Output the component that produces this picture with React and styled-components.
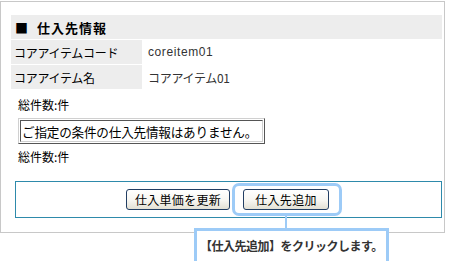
import styled, { createGlobalStyle } from "styled-components";

const GlobalStyle = createGlobalStyle`
	html, body {
		margin: 0;
		padding: 0;
		background: #fff;
	}
	body {
		font-family: "Liberation Sans", "Noto Sans CJK JP", sans-serif;
		font-size: 12px;
		color: #000;
	}
`;

// --------------------------------------------------

const Stage = styled.div`
	position: relative;
	width: 454px;
	height: 261px;
	overflow: hidden;
`;

const Panel = styled.div`
	box-sizing: border-box;
	margin-top: 1px;
	width: 445px;
	height: 232px;
	border: 1px solid #c8c8c8;
	padding: 13px 2px 0 10px;
	display: flex;
	flex-direction: column;
`;

const Heading = styled.div`
	height: 24px;
	background: #ededed;
	display: flex;
	align-items: center;
	padding-left: 4px;
	font-family: "Noto Sans CJK JP", sans-serif;
	font-weight: bold;
	font-size: 13px;
	letter-spacing: 1px;
`;

const Square = styled.span`
	margin-right: 8px;
`;

const InfoGrid = styled.div`
	display: grid;
	grid-template-columns: 131px 1fr;
	grid-auto-rows: 24px;
	row-gap: 1px;
	margin-top: 1px;
`;

const Label = styled.div`
	background: #ededed;
	display: flex;
	align-items: center;
	padding-left: 3px;
	font-family: "Noto Sans CJK JP", sans-serif;
	font-size: 12px;
	letter-spacing: -0.3px;
`;

const Value = styled.div`
	display: flex;
	align-items: center;
	padding-left: 6px;
	font-family: ${({ latin }) => latin ? `"Liberation Sans", sans-serif` : `"Noto Sans CJK JP", sans-serif`};
	font-size: 12px;
	letter-spacing: ${({ latin }) => latin ? "0.6px" : "-0.3px"};
	color: #333;
`;

const Count = styled.div`
	margin: ${({ top }) => top}px 0 0 7px;
	height: 16px;
	line-height: 16px;
	font-family: "Noto Sans CJK JP", sans-serif;
	font-size: 12px;
`;

const MessageOuter = styled.div`
	box-sizing: border-box;
	margin: 5px 0 0 7px;
	width: 247px;
	height: 26px;
	border: 1px solid;
	border-color: #d0d0d0 #555 #555 #d0d0d0;
	padding: 1px;
`;

const MessageInner = styled.div`
	box-sizing: border-box;
	height: 100%;
	border: 1px solid;
	border-color: #555 #d0d0d0 #d0d0d0 #555;
	display: flex;
	align-items: center;
	padding-left: 1px;
	font-family: "Noto Sans CJK JP", sans-serif;
	font-size: 12.6px;
	letter-spacing: -0.2px;
	white-space: nowrap;
`;

const ButtonBar = styled.div`
	box-sizing: border-box;
	margin: 16px 0 0 4px;
	height: 37px;
	border: 1px solid #2e8aab;
	display: flex;
	align-items: center;
	justify-content: center;
	gap: 13px;
	padding-right: 2px;
`;

const ButtonSlot = styled.div`
	position: relative;
	display: flex;

	${({ focus }) => focus && `
		&::before {
			content: "";
			position: absolute;
			left: -11px;
			right: -13px;
			top: -6px;
			bottom: -6px;
			border: 3px solid #9dcbf7;
			border-radius: 7px;
		}
		&::after {
			content: "";
			position: absolute;
			left: 42px;
			width: 2px;
			top: 27px;
			height: 14px;
			background: #9dcbf7;
		}
	`}
`;

const Button = styled.button`
	position: relative;
	box-sizing: border-box;
	height: 21px;
	width: ${({ w }) => w}px;
	border: 1px solid #223e63;
	border-radius: 3px;
	background: linear-gradient(#ffffff, #f7f6f1 55%, #e3e0d4);
	font-family: "Noto Sans CJK JP", sans-serif;
	font-size: 12px;
	letter-spacing: 0.3px;
	color: #000;
	padding: 0;
	display: flex;
	align-items: center;
	justify-content: center;
`;

const Callout = styled.div`
	position: absolute;
	left: 194px;
	top: 228px;
	box-sizing: border-box;
	width: 195px;
	height: 40px;
	border: 3px solid #9dcbf7;
	background: #fff;
	padding-top: 6px;
	padding-left: 3px;
	font-family: "Noto Sans CJK JP", sans-serif;
	font-weight: bold;
	font-size: 12px;
	letter-spacing: -0.5px;
	color: #333;
	white-space: nowrap;
`;

// --------------------------------------------------

const App = () => (
	<Stage>
		<GlobalStyle />
		<Panel>
			<Heading><Square>■</Square>仕入先情報</Heading>
			<InfoGrid>
				<Label>コアアイテムコード</Label>
				<Value latin>coreitem01</Value>
				<Label>コアアイテム名</Label>
				<Value>コアアイテム01</Value>
			</InfoGrid>
			<Count top={8}>総件数:件</Count>
			<MessageOuter>
				<MessageInner>ご指定の条件の仕入先情報はありません。</MessageInner>
			</MessageOuter>
			<Count top={5}>総件数:件</Count>
			<ButtonBar>
				<ButtonSlot>
					<Button w={104}>仕入単価を更新</Button>
				</ButtonSlot>
				<ButtonSlot focus>
					<Button w={86}>仕入先追加</Button>
				</ButtonSlot>
			</ButtonBar>
		</Panel>
		<Callout>【仕入先追加】をクリックします。</Callout>
	</Stage>
);

export default App;
